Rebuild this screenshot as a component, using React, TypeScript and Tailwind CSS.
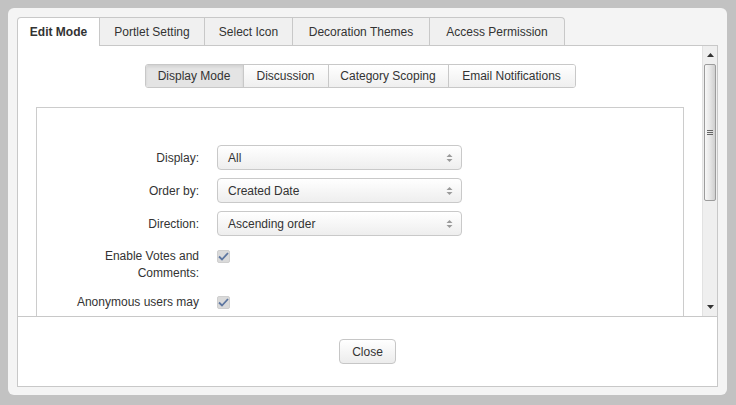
import React from "react";

const tabs = [
  { label: "Edit Mode", w: "w-[83px]" },
  { label: "Portlet Setting", w: "w-[105px]" },
  { label: "Select Icon", w: "w-[88px]" },
  { label: "Decoration Themes", w: "w-[137px]" },
  { label: "Access Permission", w: "w-[135px]" },
];

const subTabs = [
  { label: "Display Mode", w: "w-[97px]" },
  { label: "Discussion", w: "w-[85px]" },
  { label: "Category Scoping", w: "w-[120px]" },
  { label: "Email Notifications", w: "w-[127px]" },
];

const selects = [
  { label: "Display:", value: "All" },
  { label: "Order by:", value: "Created Date" },
  { label: "Direction:", value: "Ascending order" },
];

const checks = ["Enable Votes and Comments:", "Anonymous users may"];

function SelectBox({ value }: { value: string }) {
  return (
    <div className="w-[245px] h-[25px] flex items-center justify-between pl-[10px] pr-[8px] border border-[#c9c9c9] rounded-[4px] bg-gradient-to-b from-white to-[#eeeeee] text-[12px] text-[#333]">
      <span>{value}</span>
      <svg width="7" height="10" viewBox="0 0 7 10">
        <path d="M3.5 1 L6.5 4 L0.5 4 Z" fill="#9a9a9a" />
        <path d="M3.5 9 L6.5 6 L0.5 6 Z" fill="#9a9a9a" />
      </svg>
    </div>
  );
}

function Check() {
  return (
    <span className="mt-[2px] w-[13px] h-[13px] flex items-center justify-center bg-[#dadada] border border-[#cfcfcf] rounded-[2px]">
      <svg width="11" height="9" viewBox="0 0 11 9">
        <path d="M1 4.5 L4 7.5 L10 1" fill="none" stroke="#5d76a0" strokeWidth="1.8" />
      </svg>
    </span>
  );
}

function Scrollbar() {
  return (
    <div className="w-[15px] flex flex-col bg-[#efefef] border-l border-[#e2e2e2]">
      <div className="h-[18px] flex items-center justify-center">
        <svg width="7" height="4" viewBox="0 0 7 4">
          <path d="M3.5 0 L7 4 L0 4 Z" fill="#333" />
        </svg>
      </div>
      <div className="h-[137px] mx-[1px] border border-[#9c9c9c] rounded-[2px] bg-gradient-to-r from-[#f7f7f7] via-[#e6e6e6] to-[#cfcfcf] flex flex-col items-center justify-center gap-[1px]">
        <span className="w-[6px] h-[1px] bg-[#666]" />
        <span className="w-[6px] h-[1px] bg-[#666]" />
        <span className="w-[6px] h-[1px] bg-[#666]" />
      </div>
      <div className="flex-1" />
      <div className="h-[18px] flex items-center justify-center">
        <svg width="7" height="4" viewBox="0 0 7 4">
          <path d="M3.5 4 L7 0 L0 0 Z" fill="#333" />
        </svg>
      </div>
    </div>
  );
}

export default function App() {
  return (
    <div
      className="w-[736px] h-[405px] bg-[#c2c2c2] pt-[8px] pl-[8px]"
      style={{ fontFamily: '"Liberation Sans", Arial, sans-serif' }}
    >
      <div className="w-[719px] h-[387px] bg-[#f4f4f4] rounded-[6px] pt-[9px] px-[9px] flex flex-col">
        {/* top tabs */}
        <div className="flex h-[28px]">
          {tabs.map((t, i) => (
            <div
              key={t.label}
              className={
                t.w +
                " h-[29px] flex items-center justify-center text-[12px] text-[#333] border-t border-r border-[#c8c8c8] " +
                (i === 0 ? "border-l rounded-tl-[4px] bg-white font-bold relative z-10 " : "bg-[#f0f0f0] ") +
                (i === tabs.length - 1 ? "rounded-tr-[4px]" : "")
              }
            >
              {t.label}
            </div>
          ))}
        </div>

        {/* panel */}
        <div className="h-[342px] bg-white border border-[#c8c8c8] flex flex-col">
          <div className="h-[270px] flex overflow-hidden">
            <div className="flex-1 overflow-hidden flex flex-col">
              <div className="mt-[18px] flex justify-center">
                <div className="flex h-[24px] border border-[#c8c8c8] rounded-[3px] overflow-hidden">
                  {subTabs.map((s, i) => (
                    <div
                      key={s.label}
                      className={
                        s.w +
                        " flex items-center justify-center text-[12px] text-[#333] " +
                        (i > 0 ? "border-l border-[#c8c8c8] " : "") +
                        (i === 0
                          ? "bg-[#e4e4e4] shadow-[inset_0_2px_3px_rgba(0,0,0,0.08)]"
                          : "bg-gradient-to-b from-white to-[#efefef]")
                      }
                    >
                      {s.label}
                    </div>
                  ))}
                </div>
              </div>

              <div className="mt-[19px] mx-[18px] flex-1 border border-[#cccccc] border-b-0 pt-[37px]">
                <div className="flex flex-col gap-[8px]">
                  {selects.map((r) => (
                    <div key={r.label} className="flex items-center">
                      <div className="w-[180px] pr-[18px] text-right text-[12px] text-[#333]">{r.label}</div>
                      <SelectBox value={r.value} />
                    </div>
                  ))}
                </div>
                <div className="mt-[12px] flex flex-col gap-[12px]">
                  {checks.map((c) => (
                    <div key={c} className="flex items-start">
                      <div className="w-[180px] pl-[34px] pr-[18px] text-right text-[12px] leading-[17px] text-[#333]">{c}</div>
                      <Check />
                    </div>
                  ))}
                </div>
              </div>
            </div>
            <Scrollbar />
          </div>

          <div className="flex-1 border-t border-[#c8c8c8] flex items-center justify-center">
            <button className="h-[25px] px-[12px] border border-[#c6c6c6] rounded-[4px] bg-gradient-to-b from-white to-[#ececec] text-[12px] text-[#333]">
              Close
            </button>
          </div>
        </div>
      </div>
    </div>
  );
}
